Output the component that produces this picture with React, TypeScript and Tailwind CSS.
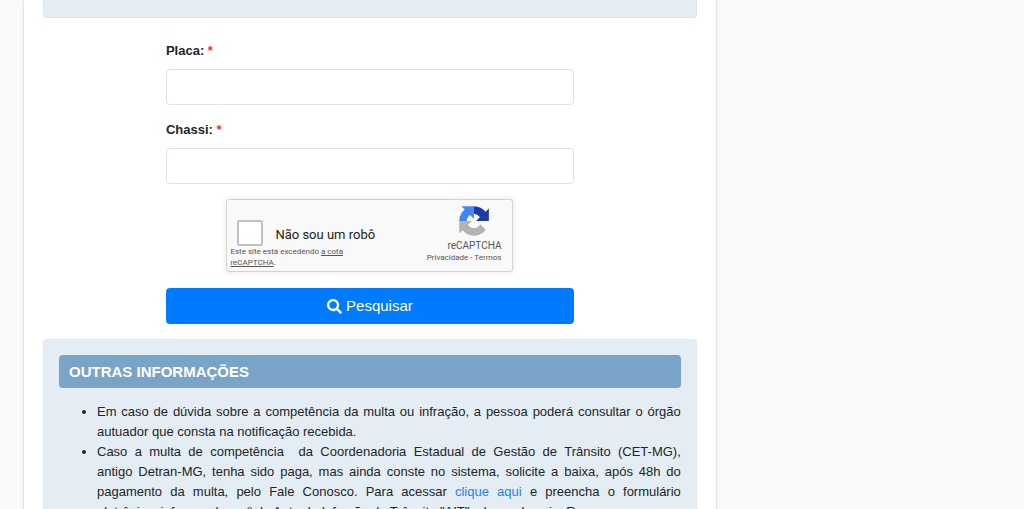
import type { ReactNode } from "react";
import { FaSearch } from "react-icons/fa";

function Field({ id, label }: { id: string; label: string }) {
  return (
    <div>
      <label htmlFor={id} className="block text-[13px] leading-5 font-bold text-[#212529]">
        {label}: <span className="text-[#ff2a35]">*</span>
      </label>
      <input
        id={id}
        type="text"
        className="mt-2 block h-9 w-full rounded border border-[#dee2e6] bg-white px-3 text-[13px] outline-none"
      />
    </div>
  );
}

function RecaptchaLogo() {
  return (
    <svg viewBox="0 0 64 64" className="h-[34px] w-[34px]" aria-hidden="true">
      <path
        fill="#1c3aa9"
        d="M60 31.96c0-.4-.01-.81-.03-1.2V8.3l-6.21 6.21C48.68 8.3 40.95 4.32 32.3 4.32c-.15 0-.3 0-.44.01v14.15c.42 0 .74.05.98.14 4.31.34 8.05 2.72 10.25 6.17l-7.2 7.2L60 31.96"
      />
      <path
        fill="#4285f4"
        d="M31.86 4.32c-.4 0-.8.01-1.2.03H8.3l6.21 6.21C8.25 15.68 4.27 23.4 4.27 32.06h14.02c0-.42.05-.74.14-.98.34-4.31 2.72-8.05 6.17-10.25l7.2 7.2.06-23.71"
      />
      <path
        fill="#b3b3b3"
        d="M4.27 31.96c0 .4.01.81.03 1.2v22.46l6.21-6.21C15.59 55.62 23.32 59.6 31.97 59.6c9.01 0 17.01-4.31 22.06-10.98L43.85 38.34a13.5 13.5 0 0 1-4.12 4.63c-1.78 1.39-4.3 2.52-7.78 2.52-.42 0-.74-.05-.98-.14-4.31-.34-8.05-2.72-10.25-6.17l7.2-7.2-23.65-.02"
      />
    </svg>
  );
}

function Recaptcha() {
  return (
    <div className="mx-auto flex h-[73px] w-[287px] justify-between rounded-[3px] border border-[#d3d3d3] bg-[#f9f9f9] font-[Roboto,sans-serif] shadow-[0_0_4px_1px_rgba(0,0,0,0.08)]">
      <div className="flex flex-col pt-5 pl-[3px]">
        <div className="flex items-center gap-3 pl-[7px]">
          <input
            id="robot"
            type="checkbox"
            className="h-[26px] w-[26px] appearance-none rounded-[2px] border-2 border-[#c1c1c1] bg-white"
          />
          <label htmlFor="robot" className="pt-1 text-[13px] leading-5 text-[#222222]">
            Não sou um robô
          </label>
        </div>
        <p className="w-[140px] text-[8px] leading-[11px] text-[#555555]">
          Este site está excedendo{" "}
          <a href="#cota" className="underline">
            a cota reCAPTCHA
          </a>
          .
        </p>
      </div>
      <div className="flex flex-col items-end pt-1 pr-[11px] text-[#555555]">
        <div className="pr-[10px]">
          <RecaptchaLogo />
        </div>
        <span className="mt-[2px] text-[10px] leading-3">reCAPTCHA</span>
        <span className="text-[8px] leading-3">
          <a href="#privacidade">Privacidade</a> - <a href="#termos">Termos</a>
        </span>
      </div>
    </div>
  );
}

function Panel({ children }: { children?: ReactNode }) {
  return (
    <section className="rounded border border-[#dfe9ef] bg-[#e4edf3] p-[15px]">{children}</section>
  );
}

export default function App() {
  return (
    <div className="h-screen overflow-hidden bg-[#f8f9fa] font-['Liberation_Sans',Arial,sans-serif] text-[#212529]">
      <main className="mr-[30%] ml-[23px] min-h-full border-x border-[#e3e5e7] bg-white px-[19px] shadow-[0_0_3px_rgba(0,0,0,0.08)]">
        <div className="h-[18px] rounded-b border border-t-0 border-[#dbe6e9] bg-[#e4edf3]" />
        <form
          className="mx-auto flex max-w-[408px] flex-col gap-[15px] pt-[23px]"
          onSubmit={(event) => event.preventDefault()}
        >
          <Field id="placa" label="Placa" />
          <Field id="chassi" label="Chassi" />
          <Recaptcha />
          <button
            type="submit"
            className="mt-[1px] flex h-9 w-full items-center justify-center gap-1 rounded bg-[#007bff] text-[15px] text-white"
          >
            <FaSearch className="h-[15px] w-[15px]" aria-hidden="true" />
            Pesquisar
          </button>
        </form>
        <div className="pt-[15px]">
          <Panel>
            <h2 className="rounded bg-[#7aa3c8] px-[10px] py-[6px] text-[15px] leading-[21px] font-bold text-white">
              OUTRAS INFORMAÇÕES
            </h2>
            <ul className="mt-[14px] list-disc pl-[38px] text-justify text-[13px] leading-5">
              <li>
                Em caso de dúvida sobre a competência da multa ou infração, a pessoa poderá
                consultar o órgão autuador que consta na notificação recebida.
              </li>
              <li>
                Caso a multa de competência&nbsp; da Coordenadoria Estadual de Gestão de Trânsito
                (CET-MG), <span className="whitespace-nowrap">antigo Detran-MG,</span> tenha sido
                paga, mas ainda conste no sistema, solicite a baixa, após 48h do pagamento da multa,
                pelo Fale Conosco. Para acessar{" "}
                <a href="#fale-conosco" className="text-[#2680ff]">
                  clique aqui
                </a>{" "}
                e preencha o formulário eletrônico, informando o nº do Auto de Infração de Trânsito
                "AIT", placa, chassi e Renavam.
              </li>
            </ul>
          </Panel>
        </div>
      </main>
    </div>
  );
}
